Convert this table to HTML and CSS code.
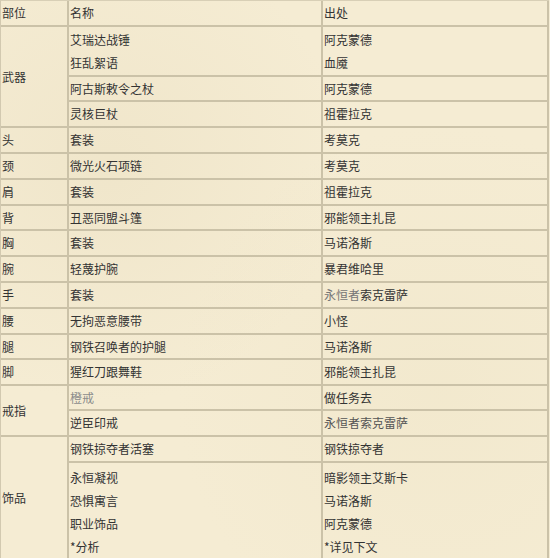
FILE: index.html
```html
<!DOCTYPE html>
<html lang="zh">
<head>
<meta charset="utf-8">
<title>装备</title>
<link rel="stylesheet" href="styles.css">
</head>
<body>
<table class="gear">
  <colgroup>
    <col class="c1">
    <col class="c2">
    <col class="c3">
  </colgroup>
  <tr class="head">
    <td>部位</td><td>名称</td><td>出处</td>
  </tr>
  <tr>
    <td rowspan="3">武器</td>
    <td class="multi">艾瑞达战锤<br>狂乱絮语</td>
    <td class="multi">阿克蒙德<br>血魇</td>
  </tr>
  <tr class="short"><td>阿古斯敕令之杖</td><td>阿克蒙德</td></tr>
  <tr><td>灵核巨杖</td><td>祖霍拉克</td></tr>
  <tr><td>头</td><td>套装</td><td>考莫克</td></tr>
  <tr><td>颈</td><td>微光火石项链</td><td>考莫克</td></tr>
  <tr><td>肩</td><td>套装</td><td>祖霍拉克</td></tr>
  <tr class="short"><td>背</td><td>丑恶同盟斗篷</td><td>邪能领主扎昆</td></tr>
  <tr><td>胸</td><td>套装</td><td>马诺洛斯</td></tr>
  <tr><td>腕</td><td>轻蔑护腕</td><td>暴君维哈里</td></tr>
  <tr><td>手</td><td>套装</td><td><span class="dim">永恒者</span>索克雷萨</td></tr>
  <tr><td>腰</td><td>无拘恶意腰带</td><td>小怪</td></tr>
  <tr class="short"><td>腿</td><td>钢铁召唤者的护腿</td><td>马诺洛斯</td></tr>
  <tr><td>脚</td><td>猩红刀跟舞鞋</td><td>邪能领主扎昆</td></tr>
  <tr class="short">
    <td rowspan="2">戒指</td>
    <td class="grey">橙戒</td>
    <td>做任务去</td>
  </tr>
  <tr><td>逆臣印戒</td><td class="soft">永恒者索克雷萨</td></tr>
  <tr>
    <td rowspan="2">饰品</td>
    <td>钢铁掠夺者活塞</td>
    <td>钢铁掠夺者</td>
  </tr>
  <tr class="last">
    <td class="multi">永恒凝视<br>恐惧寓言<br>职业饰品<br>*分析</td>
    <td class="multi">暗影领主艾斯卡<br>马诺洛斯<br>阿克蒙德<br>*详见下文</td>
  </tr>
</table>
</body>
</html>
```

FILE: styles.css
```css
html, body {
  margin: 0;
  padding: 0;
  background: #f5ecd3;
}

body {
  font-family: "Noto Sans CJK SC", "Noto Sans", sans-serif;
  font-size: 12px;
  color: #333;
  background:
    radial-gradient(circle at 20% 30%, rgba(230, 218, 186, 0.35), transparent 40%),
    radial-gradient(circle at 80% 70%, rgba(238, 228, 198, 0.4), transparent 45%),
    #f5ecd3;
  height: 558px;
  overflow: hidden;
}

.gear {
  table-layout: fixed;
  width: 549px;
  border-collapse: separate;
  border-spacing: 0;
  border-left: 1px solid #d2c9b0;
  border-top: 1px solid #d8cfb6;
}

.c1 { width: 68px; }
.c2 { width: 254px; }
.c3 { width: 226px; }

.gear td {
  border-right: 2px solid #cbc2a8;
  border-bottom: 2px solid #cbc2a8;
  padding: 1px;
  line-height: 22px;
  vertical-align: middle;
  white-space: nowrap;
}

.gear .short td {
  padding-bottom: 0;
}

.gear td.multi {
  line-height: 23px;
}

.gear .last td {
  padding-top: 3px;
}

.grey {
  color: #8c8c8c;
}

.dim {
  color: #777;
}

.soft {
  color: #555;
}
```
